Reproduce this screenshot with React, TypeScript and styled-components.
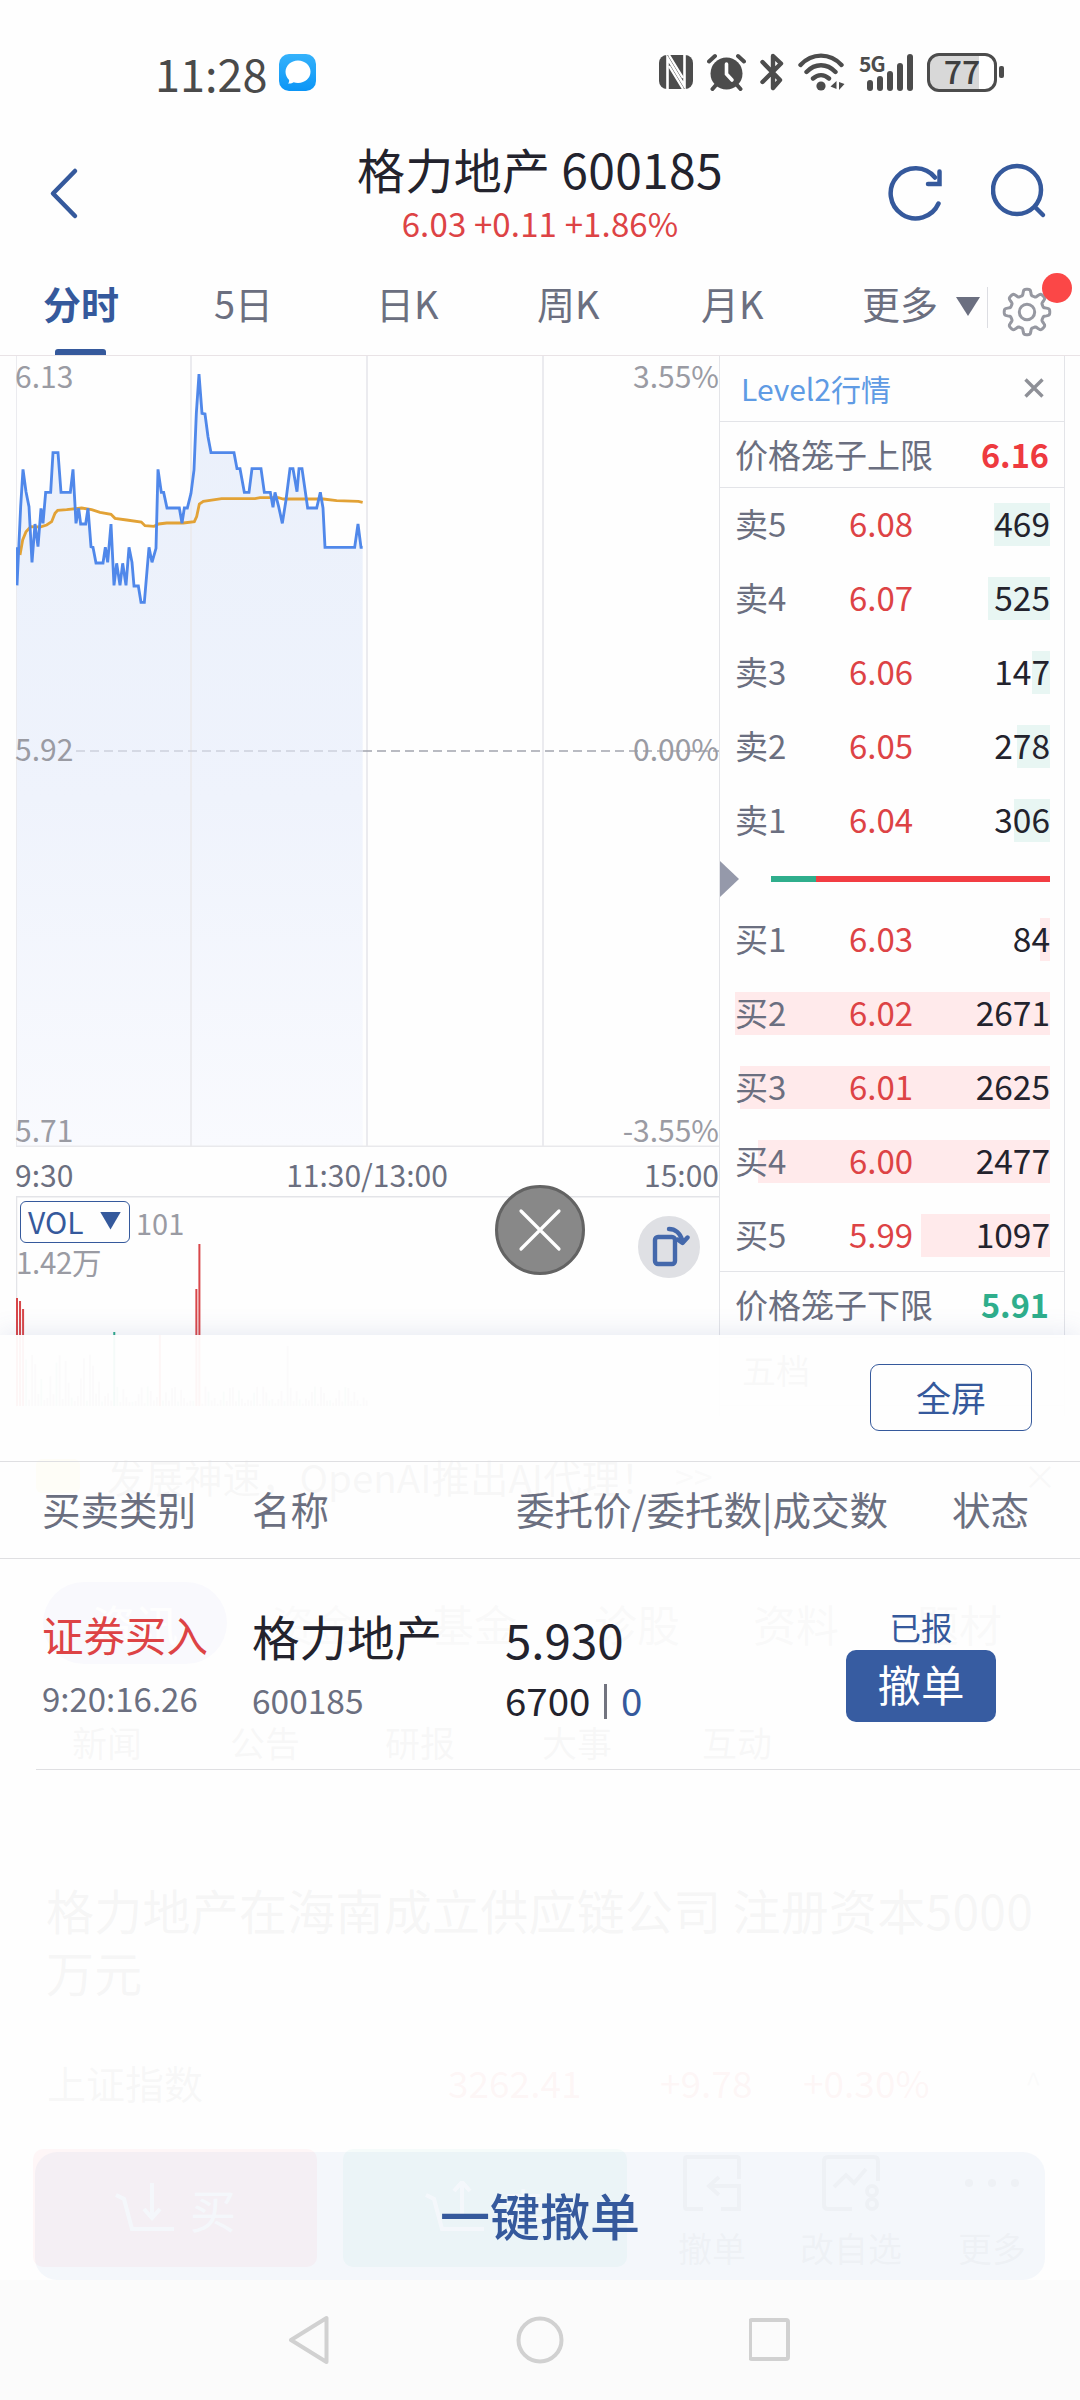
import React from "react";
import styled, { createGlobalStyle } from "styled-components";

const BLUE = "#35599c";
const RED = "#dd4345";
const GRAY = "#6b6f80";
const INK = "#23232d";
const LINE = "#e3e4e8";

const GlobalStyle = createGlobalStyle`
  * { box-sizing: border-box; }
  body { margin: 0; background: #fdfdfe; }
  body, button { font-family: "Noto Sans CJK SC", "Noto Sans", sans-serif; }
`;

const Phone = styled.div`
  position: relative;
  width: 1080px;
  height: 2400px;
  overflow: hidden;
  background: #fefefe;
`;

const Label = styled.span<{ $size: number; $color?: string; $bold?: boolean; $spacing?: number }>`
  font-size: ${(p) => p.$size}px;
  line-height: 1;
  color: ${(p) => p.$color ?? GRAY};
  font-weight: ${(p) => (p.$bold ? 700 : 400)};
  letter-spacing: ${(p) => p.$spacing ?? 0}px;
  white-space: nowrap;
`;

/* ---------- status bar ---------- */

const StatusBar = styled.header`
  height: 140px;
  padding: 47px 83px 43px 155px;
  display: flex;
  justify-content: space-between;
  align-items: center;
`;

const StatusGroup = styled.div<{ $gap: number }>`
  display: flex;
  align-items: center;
  gap: ${(p) => p.$gap}px;
`;

const ChatBadge = styled.span`
  width: 37px;
  height: 37px;
  border-radius: 10px;
  background: linear-gradient(#35b2fb, #0b95f6);
  display: grid;
  place-items: center;
`;

const Signal = styled.span`
  position: relative;
  width: 54px;
  height: 38px;
  display: flex;
  justify-content: flex-end;
  align-items: flex-end;
  gap: 4px;
`;

const SignalBar = styled.i<{ $h: number }>`
  width: 6px;
  height: ${(p) => p.$h}px;
  border-radius: 3px;
  background: #4c4c4c;
`;

const NetType = styled.b`
  position: absolute;
  left: 0;
  top: -1px;
  font: 700 21px/22px "Noto Sans CJK SC", sans-serif;
  letter-spacing: -1px;
  color: #4c4c4c;
`;

const Battery = styled.span`
  position: relative;
  width: 70px;
  height: 39px;
  border: 3px solid #4c4c4c;
  border-radius: 12px;
  background: linear-gradient(90deg, #d8d8d8 77%, #fff 77%);
  font: 500 32px/29px "Noto Sans CJK SC", sans-serif;
  color: #3f3f3f;
  text-align: center;
  &::after {
    content: "";
    position: absolute;
    right: -10px;
    top: 10px;
    width: 5px;
    height: 12px;
    border-radius: 2px;
    background: #4c4c4c;
  }
`;

/* ---------- title ---------- */

const TitleBar = styled.div`
  height: 115px;
  display: grid;
  grid-template-columns: 200px 1fr 200px;
`;

const BackCell = styled.div`
  padding: 26px 0 0 48px;
`;

const TitleCell = styled.div`
  display: flex;
  flex-direction: column;
  align-items: center;
  padding-top: 4px;
  gap: 15px;
`;

const ToolCell = styled.div`
  display: flex;
  gap: 47px;
  padding: 23px 0 0 8px;
`;

/* ---------- tabs ---------- */

const Tabs = styled.nav`
  height: 101px;
  display: grid;
  grid-template-columns: 171px 162px 161px 164px 161px 123px 46px 92px;
  padding-top: 29px;
  border-bottom: 1.5px solid #e9e3e6;
  background: #fefefe;
`;

const Tab = styled.div<{ $active?: boolean }>`
  padding-left: 43px;
  display: flex;
  flex-direction: column;
  justify-content: space-between;
  font-size: 38px;
  line-height: 38px;
  white-space: nowrap;
  color: ${(p) => (p.$active ? BLUE : GRAY)};
  font-weight: ${(p) => (p.$active ? 700 : 400)};
  &::after {
    content: "";
    width: 51px;
    height: 6px;
    margin-left: 12px;
    border-radius: 3px 3px 0 0;
    background: ${(p) => (p.$active ? BLUE : "transparent")};
  }
`;

const Caret = styled.i<{ $w: number; $h: number; $color: string }>`
  display: block;
  width: ${(p) => p.$w}px;
  height: ${(p) => p.$h}px;
  background: ${(p) => p.$color};
  clip-path: polygon(0 0, 100% 0, 50% 100%);
`;

const CaretCell = styled.div`
  height: 41px;
  margin-top: 3px;
  padding-top: 10px;
  border-right: 1px solid #dcdde2;
  padding-left: 14px;
`;

const GearCell = styled.div`
  position: relative;
  padding: 3px 0 0 14px;
`;

const RedDot = styled.i`
  position: absolute;
  left: 54px;
  top: -11px;
  width: 30px;
  height: 30px;
  border-radius: 50%;
  background: #fb4747;
`;

/* ---------- quote area ---------- */

const Quote = styled.main`
  display: grid;
  grid-template-columns: 703px 346px;
  padding-left: 16px;
  height: 1060px;
`;

const ChartColumn = styled.section`
  display: flex;
  flex-direction: column;
`;

const Layered = styled.div<{ $h: number }>`
  display: grid;
  height: ${(p) => p.$h}px;
  > * { grid-area: 1 / 1; }
`;

const AxisLabels = styled.div`
  display: grid;
  grid-template-columns: 1fr auto;
  grid-template-rows: 373px 381px 1fr;
  padding-top: 4px;
  margin-left: -1px;
  > :nth-child(even) { text-align: right; }
`;

const TimeAxis = styled.div`
  height: 49px;
  display: grid;
  grid-template-columns: 1fr auto 1fr;
  padding-top: 12px;
  margin-left: -1px;
  > :last-child { text-align: right; }
`;

const VolHead = styled.div`
  padding: 5px 0 0 4px;
  display: flex;
  flex-direction: column;
  gap: 4px;
`;

const VolRow = styled.div`
  display: flex;
  align-items: center;
  gap: 6px;
`;

const VolPick = styled.button`
  width: 110px;
  height: 42px;
  border: 1.5px solid ${BLUE};
  border-radius: 6px;
  background: transparent;
  color: ${BLUE};
  font-size: 30px;
  line-height: 34px;
  padding: 0 8px 3px 7px;
  display: flex;
  justify-content: space-between;
  align-items: center;
`;

/* ---------- order book ---------- */

const Book = styled.section`
  border-left: 1.5px solid ${LINE};
  border-right: 1.5px solid ${LINE};
`;

const BookRow = styled.div<{ $h: number; $pad?: string }>`
  height: ${(p) => p.$h}px;
  padding: ${(p) => p.$pad ?? "0 15px 1px 15px"};
  display: flex;
  align-items: center;
  justify-content: space-between;
  border-bottom: 1.5px solid ${LINE};
`;

const Levels = styled.div<{ $top: number; $bottom: number }>`
  padding: ${(p) => p.$top}px 14px ${(p) => p.$bottom}px 15px;
  display: flex;
  flex-direction: column;
  gap: 31px;
`;

const Level = styled.div<{ $side: "sell" | "buy" }>`
  height: 43px;
  display: grid;
  grid-template-columns: 114px 1fr auto;
  align-items: center;
  padding-bottom: 3px;
  background: linear-gradient(${(p) => (p.$side === "sell" ? "#e8f6f3, #e8f6f3" : "#ffeaeb, #ffeaeb")}) right / var(--w) 100% no-repeat;
`;

const RatioRow = styled.div`
  height: 36px;
  display: flex;
  align-items: center;
  padding-right: 14px;
`;

const Pointer = styled.i`
  width: 19px;
  height: 36px;
  margin-right: 32px;
  background: #9599aa;
  clip-path: polygon(0 0, 100% 50%, 0 100%);
`;

const Ratio = styled.div`
  flex: 1;
  height: 6px;
  background: linear-gradient(90deg, #2fae8c 45px, #f23d43 45px);
`;

/* ---------- page content under the sheet ---------- */

const Strip = styled.div<{ $h: number; $cols: string; $left: number }>`
  height: ${(p) => p.$h}px;
  padding-left: ${(p) => p.$left}px;
  display: grid;
  grid-template-columns: ${(p) => p.$cols};
  align-items: center;
`;

const AdTag = styled.i`
  width: 44px;
  height: 34px;
  border-radius: 6px;
  background: #f5dc5a;
`;

const Pill = styled.span`
  width: 184px;
  height: 82px;
  border-radius: 41px;
  background: #8f8fd8;
  display: grid;
  place-items: center;
`;

const NewsTab = styled.span`
  font-size: 35px;
  line-height: 56px;
  color: #666;
`;

const Headline = styled.p`
  margin: 0;
  padding: 104px 0 0 46px;
  height: 250px;
  font-size: 48px;
  line-height: 62px;
  letter-spacing: 0.25px;
  color: #444;
  white-space: nowrap;
`;

const TradeBar = styled.div`
  margin-top: 9px;
  padding-left: 33px;
  display: flex;
  align-items: flex-start;
`;

const TradeButton = styled.span<{ $color: string; $mr: number }>`
  width: 284px;
  height: 118px;
  margin-right: ${(p) => p.$mr}px;
  border-radius: 10px;
  background: ${(p) => p.$color};
  display: flex;
  align-items: center;
  justify-content: center;
  gap: 16px;
`;

const TradeItem = styled.span<{ $w: number }>`
  width: ${(p) => p.$w}px;
  height: 116px;
  padding-top: 6px;
  display: flex;
  flex-direction: column;
  align-items: center;
  justify-content: space-between;
`;

/* ---------- sheet ---------- */

const Sheet = styled.section`
  position: absolute;
  left: 0;
  top: 1335px;
  width: 1080px;
  height: 945px;
  display: flex;
  flex-direction: column;
  background: rgba(254, 254, 254, 0.955);
  box-shadow: 0 -2px 24px rgba(70, 95, 160, 0.13);
`;

const SheetTools = styled.div`
  height: 127px;
  padding: 29px 48px 0 0;
  display: flex;
  justify-content: flex-end;
  border-bottom: 1.5px solid #dfdfe2;
`;

const FullButton = styled.button`
  width: 162px;
  height: 67px;
  border: 1.5px solid ${BLUE};
  border-radius: 9px;
  background: transparent;
  font-size: 35px;
  line-height: 1;
  padding: 0 0 3px;
  color: ${BLUE};
`;

const HeadRow = styled.div`
  height: 97px;
  padding: 0 51px 4px 42px;
  display: grid;
  grid-template-columns: 210px 1fr auto 64px auto;
  align-items: center;
  border-bottom: 1.5px solid #dfdfe2;
  > :nth-child(4) { grid-column: 5; }
`;

const OrderRow = styled.div`
  height: 211px;
  margin-left: 36px;
  padding-left: 6px;
  display: grid;
  grid-template-columns: 210px 253px 1fr 150px 84px;
  border-bottom: 1.5px solid #dfdfe2;
  > :nth-child(4) { grid-column: 4; }
`;

const Cell = styled.div<{ $top: number; $gap: number }>`
  display: flex;
  flex-direction: column;
  padding-top: ${(p) => p.$top}px;
  gap: ${(p) => p.$gap}px;
`;

const Filled = styled.div`
  display: flex;
  align-items: center;
  gap: 14px;
`;

const Divider = styled.i`
  width: 2.5px;
  height: 35px;
  margin-top: 4px;
  background: #72747f;
`;

const StateCell = styled.div`
  display: flex;
  flex-direction: column;
  align-items: center;
  padding-top: 52px;
  gap: 7px;
`;

const CancelButton = styled.button`
  width: 150px;
  height: 72px;
  border: 0;
  border-radius: 10px;
  background: #375ca1;
  color: #fff;
  font-size: 43.5px;
  line-height: 1;
  padding: 0 0 3px;
`;

const CancelAll = styled.button`
  margin: auto 35px 0;
  height: 128px;
  border: 0;
  border-radius: 22px;
  background: rgba(60, 110, 190, 0.052);
  color: ${BLUE};
  font-size: 50px;
  font-weight: 500;
  line-height: 1;
  padding: 0 0 5px;
`;

const NavBar = styled.footer`
  position: absolute;
  left: 0;
  top: 2280px;
  width: 1080px;
  height: 120px;
  padding: 0 289px;
  display: flex;
  justify-content: space-between;
  align-items: center;
  background: #fbfbfb;
`;

/* ---------- floating buttons ---------- */

const Float = styled.button<{ $x: number; $y: number; $r: number; $bg: string; $edge: string }>`
  position: absolute;
  left: ${(p) => p.$x - p.$r}px;
  top: ${(p) => p.$y - p.$r}px;
  width: ${(p) => p.$r * 2}px;
  height: ${(p) => p.$r * 2}px;
  padding: 0;
  border: 3px solid ${(p) => p.$edge};
  border-radius: 50%;
  background: ${(p) => p.$bg};
  display: grid;
  place-items: center;
`;

/* ---------- data ---------- */

const PRICE =
  "48,592 51,706 62,470 69,358 78,425 87,470 96,637 105,522 114,590 123,475 129,520 137,427 152,427 159,308 174,308 183,427 211,427 219,358 228,520 236,475 242,522 257,522 264,475 273,590 279,592 288,639 309,639 316,592 323,637 333,522 342,706 350,640 360,706 368,640 378,706 387,592 396,637 402,708 415,708 423,757 433,757 447,592 456,637 468,595 474,358 484,427 491,427 501,474 538,474 546,520 553,474 562,474 573,430 582,360 589,190 597,72 606,190 615,192 624,260 633,308 702,308 711,356 720,356 733,427 747,427 756,356 783,356 793,427 811,427 819,472 825,427 836,470 847,520 858,450 870,356 879,356 891,425 897,356 906,356 923,474 950,474 961,427 969,474 975,592 1064,592 1074,522 1083,592 1088,592";
const AVERAGE =
  "60,615 68,570 78,545 92,530 120,531 140,525 155,515 165,490 173,481 200,479 245,474 275,479 300,487 333,493 345,505 380,510 424,516 435,527 462,529 476,522 500,519 550,519 583,515 590,500 598,462 610,454 665,446 765,446 780,443 835,443 850,447 970,447 1010,452 1075,454 1088,457";

const SELLS: [string, string, number, number][] = [
  ["卖5", "6.08", 469, 56],
  ["卖4", "6.07", 525, 62],
  ["卖3", "6.06", 147, 18],
  ["卖2", "6.05", 278, 33],
  ["卖1", "6.04", 306, 36],
];
const BUYS: [string, string, number, number][] = [
  ["买1", "6.03", 84, 10],
  ["买2", "6.02", 2671, 315],
  ["买3", "6.01", 2625, 310],
  ["买4", "6.00", 2477, 292],
  ["买5", "5.99", 1097, 129],
];

const VOLUME = Array.from({ length: 116 }, (_, i) => {
  const fixed: Record<number, number> = { 0: 112, 1: 109, 2: 101, 32: 78, 47: 75, 59: 121, 60: 166, 89: 64 };
  const wave = Math.abs(Math.sin(i * 12.9) * Math.cos(i * 4.3));
  const h = fixed[i] ?? 6 + wave * (i < 30 ? 56 : 20);
  const main = i < 3 || i === 47 || i === 59 || i === 60;
  const color = i === 32 ? "#2fa98a" : main ? "#d8474a" : i % 5 === 3 ? "#8fc9b8" : "#b5a9ad";
  return { x: i * 3.04, h, color };
});

function Ladder({ rows, side, top, bottom }: { rows: typeof SELLS; side: "sell" | "buy"; top: number; bottom: number }) {
  return (
    <Levels $top={top} $bottom={bottom}>
      {rows.map(([name, price, qty, w]) => (
        <Level key={name} $side={side} style={{ "--w": `${w}px` } as React.CSSProperties}>
          <Label $size={33}>{name}</Label>
          <Label $size={33} $color={RED}>{price}</Label>
          <Label $size={33.5} $color={INK}>{qty}</Label>
        </Level>
      ))}
    </Levels>
  );
}

function PriceChart() {
  return (
    <svg width="703" height="791" viewBox="0 0 703 791">
      <defs>
        <linearGradient id="area" x1="0" y1="0" x2="0" y2="1">
          <stop offset="0" stopColor="#eaf0fb" />
          <stop offset="0.55" stopColor="#eff3fc" />
          <stop offset="1" stopColor="#f9fafe" />
        </linearGradient>
      </defs>
      <g transform="translate(-16 -6) scale(0.33333)">
        <polygon points={`48,2388 ${PRICE} 1088,2388`} fill="url(#area)" />
      </g>
      <g stroke="#ebebef" strokeWidth="2">
        <path d="M0 0V791M175 0V791M351 0V791M527 0V791" />
        <path d="M0 790.500H703" stroke="#e9e9ec" />
      </g>
      <path d="M60 395H347" stroke="#cdd1dc" strokeWidth="1.6" strokeDasharray="9 5" />
      <path d="M347 395H703" stroke="#a2a5af" strokeWidth="1.6" strokeDasharray="9 5" />
      <g transform="translate(-16 -6) scale(0.33333)" fill="none" strokeWidth="8.5" strokeLinejoin="miter" strokeMiterlimit="2">
        <polyline points={AVERAGE} stroke="#e2a236" />
        <polyline points={PRICE} stroke="#5088ea" />
      </g>
    </svg>
  );
}

function GearIcon() {
  const pts: string[] = [];
  for (let i = 0; i <= 160; i++) {
    const a = (i / 160) * Math.PI * 2 - Math.PI / 2;
    const c = Math.cos(8 * (a + Math.PI / 2));
    const r = 19.8 + 3 * Math.tanh(c * 2.4);
    pts.push(`${(25 + r * Math.cos(a)).toFixed(2)},${(25 + r * Math.sin(a)).toFixed(2)}`);
  }
  return (
    <svg width="50" height="50" viewBox="0 0 50 50" fill="none" stroke="#9698a1" strokeWidth="3">
      <polygon points={pts.join(" ")} strokeLinejoin="round" />
      <circle cx="25" cy="25" r="7.7" />
    </svg>
  );
}

export default function App() {
  return (
    <Phone>
      <GlobalStyle />
      <StatusBar>
        <StatusGroup $gap={12}>
          <Label $size={45} $color="#4a4a4a">11:28</Label>
          <ChatBadge>
            <svg width="28" height="28" viewBox="0 0 28 28">
              <path d="M14 2.5c7 0 12.500 5 12.500 11.300S21 25 14 25c-1.600 0-3-.2-4.300-.7-1.500 1-3.500 1.500-5.700 1.200 1-1 1.300-2.300 1.100-3.600C2.900 19.900 1.500 17 1.500 13.800 1.500 7.500 7 2.500 14 2.500z" fill="#fff" />
            </svg>
          </ChatBadge>
        </StatusGroup>
        <StatusGroup $gap={14}>
          <svg width="34" height="36" viewBox="0 0 34 36">
            <rect x="0" y="1" width="34" height="34" rx="8" fill="#4c4c4c" />
            <path d="M8.500 35V4L25.500 32V1" fill="none" stroke="#fff" strokeWidth="2.600" />
            <path d="M10 12L24 35M10 1L24 24" fill="none" stroke="#fff" strokeWidth="2.400" />
          </svg>
          <svg width="39" height="38" viewBox="0 0 39 38" fill="none" stroke="#4c4c4c" strokeLinecap="round">
            <circle cx="19.500" cy="20.500" r="16" fill="#4c4c4c" stroke="none" />
            <path d="M2 8.500L8 3M37 8.500L31 3M9 32L5.500 36M30 32L33.500 36" strokeWidth="4" />
            <path d="M19.500 11V21L25 27" stroke="#fff" strokeWidth="3.600" />
          </svg>
          <svg width="24" height="38" viewBox="0 0 24 38" fill="none" stroke="#4c4c4c" strokeWidth="4.400" strokeLinejoin="round" strokeLinecap="round">
            <path d="M2.500 9L20 27L13 35V3L21 10.500L2.500 29" />
          </svg>
          <svg width="47" height="38" viewBox="0 0 47 38" fill="none" stroke="#4c4c4c" strokeWidth="4.400" strokeLinecap="round">
            <path d="M2.500 12C14-.5 32-.5 43.500 12M8.500 19C17 10 29 10 37.500 19M15 25.500C20 21 26 21 31 25.500" />
            <circle cx="23" cy="33" r="4.600" fill="#4c4c4c" stroke="none" />
            <path d="M38.500 28V36L32.500 33.500zM41 29V37L46.500 31z" fill="#4c4c4c" stroke="none" />
          </svg>
          <Signal>
            <NetType>5G</NetType>
            <SignalBar $h={11} />
            <SignalBar $h={15} />
            <SignalBar $h={20} />
            <SignalBar $h={28} />
            <SignalBar $h={37} />
          </Signal>
          <Battery>77</Battery>
        </StatusGroup>
      </StatusBar>

      <TitleBar>
        <BackCell>
          <svg width="32" height="56" viewBox="0 0 32 56" fill="none" stroke={BLUE} strokeWidth="4.500" strokeLinecap="round" strokeLinejoin="round">
            <path d="M27 5L5 27.500L27 50" />
          </svg>
        </BackCell>
        <TitleCell>
          <Label $size={48} $color={INK} $spacing={0.3}>格力地产 600185</Label>
          <Label $size={33} $color={RED} $spacing={0.15}>6.03 +0.11 +1.86%</Label>
        </TitleCell>
        <ToolCell>
          <svg width="56" height="60" viewBox="0 0 56 60" fill="none" stroke={BLUE} strokeWidth="4.500">
            <path d="M50.500 40.500A25 25 0 1 1 47 14.500" strokeLinecap="round" />
            <path d="M51.500 8.500V21H40" strokeLinecap="round" />
          </svg>
          <svg width="56" height="60" viewBox="0 0 56 60" fill="none" stroke={BLUE} strokeWidth="4.500" strokeLinecap="round">
            <circle cx="26" cy="27" r="24" />
            <path d="M44 44L52 52" />
          </svg>
        </ToolCell>
      </TitleBar>

      <Tabs>
        <Tab $active>分时</Tab>
        <Tab>5日</Tab>
        <Tab>日K</Tab>
        <Tab>周K</Tab>
        <Tab>月K</Tab>
        <Tab>更多</Tab>
        <CaretCell><Caret $w={24} $h={19} $color={GRAY} /></CaretCell>
        <GearCell>
          <GearIcon />
          <RedDot />
        </GearCell>
      </Tabs>

      <Quote>
        <ChartColumn>
          <Layered $h={791}>
            <PriceChart />
            <AxisLabels>
              <Label $size={30} $color="#9a9ba3">6.13</Label>
              <Label $size={30} $color="#9a9ba3">3.55%</Label>
              <Label $size={30} $color="#9a9ba3">5.92</Label>
              <Label $size={30} $color="#9a9ba3">0.00%</Label>
              <Label $size={30} $color="#9a9ba3">5.71</Label>
              <Label $size={30} $color="#9a9ba3">-3.55%</Label>
            </AxisLabels>
          </Layered>
          <TimeAxis>
            <Label $size={30}>9:30</Label>
            <Label $size={30}>11:30/13:00</Label>
            <Label $size={30}>15:00</Label>
          </TimeAxis>
          <Layered $h={211}>
            <svg width="703" height="211" viewBox="0 0 703 211">
              <path d="M.5 211V.8H703" fill="none" stroke={LINE} strokeWidth="1.500" />
              {VOLUME.map((v) => (
                <rect key={v.x} x={v.x} y={214 - v.h} width="2" height={v.h - 4} fill={v.color} />
              ))}
            </svg>
            <VolHead>
              <VolRow>
                <VolPick>VOL<Caret $w={21} $h={18} $color={BLUE} /></VolPick>
                <Label $size={29} $color="#9a9ba3">101</Label>
              </VolRow>
              <Label $size={29.5} $color="#9a9ba3" $spacing={-0.3}>
                <span style={{ marginLeft: -4 }}>1.42万</span>
              </Label>
            </VolHead>
          </Layered>
        </ChartColumn>

        <Book>
          <BookRow $h={66} $pad="0 20px 2px 21px">
            <Label $size={30} $color="#5f9be4">Level2行情</Label>
            <svg width="20" height="20" viewBox="0 0 20 20" stroke="#8e9097" strokeWidth="3.400">
              <path d="M1.500 1.500L18.500 18.500M18.500 1.500L1.500 18.500" />
            </svg>
          </BookRow>
          <BookRow $h={66}>
            <Label $size={33}>价格笼子上限</Label>
            <Label $size={32.5} $color="#ee3a3f" $bold>6.16</Label>
          </BookRow>
          <Ladder rows={SELLS} side="sell" top={15} bottom={19} />
          <RatioRow>
            <Pointer />
            <Ratio />
          </RatioRow>
          <Ladder rows={BUYS} side="buy" top={21} bottom={14} />
          <BookRow $h={67} style={{ borderTop: `1.5px solid ${LINE}` }}>
            <Label $size={33}>价格笼子下限</Label>
            <Label $size={32.5} $color="#2fae8c" $bold>5.91</Label>
          </BookRow>
          <BookRow $h={68} $pad="0 30px 4px 22px">
            <Label $size={34} $color="#777">五档</Label>
          </BookRow>
        </Book>
      </Quote>

      <Strip $h={120} $cols="71px 568px 348px auto" $left={36}>
        <AdTag />
        <Label $size={38.5} $color="#666">发展神速，OpenAI推出AI代理！</Label>
        <Label $size={34} $color="#999">&gt;&gt;</Label>
        <Label $size={34} $color="#777">×</Label>
      </Strip>
      <Strip $h={174} $cols="228px 160px 163px 159px 163px auto" $left={43}>
        <Pill><Label $size={43} $color="#fff">资讯</Label></Pill>
        <Label $size={43} $color="#aaa">资金</Label>
        <Label $size={43} $color="#888">基金</Label>
        <Label $size={43} $color="#888">诊股</Label>
        <Label $size={43} $color="#888">资料</Label>
        <Label $size={43} $color="#888">题材</Label>
      </Strip>
      <Strip $h={64} $cols="158px 155px 157px 160px auto" $left={72}>
        <NewsTab>新闻</NewsTab>
        <NewsTab>公告</NewsTab>
        <NewsTab>研报</NewsTab>
        <NewsTab>大事</NewsTab>
        <NewsTab>互动</NewsTab>
      </Strip>
      <Headline>
        格力地产在海南成立供应链公司 注册资本5000
        <br />
        万元
      </Headline>
      <Strip $h={116} $cols="401px 212px 143px 222px auto" $left={47}>
        <Label $size={39} $color="#666">上证指数</Label>
        <Label $size={37} $color="#e0474a">3262.41</Label>
        <Label $size={37} $color="#e0474a">+9.78</Label>
        <Label $size={37} $color="#e0474a">+0.30%</Label>
        <Label $size={30} $color="#aaa">^</Label>
      </Strip>
      <TradeBar>
        <TradeButton $color="#f2485c" $mr={26}>
          <svg width="60" height="54" viewBox="0 0 60 54" fill="none" stroke="#fff" strokeWidth="4">
            <path d="M2 14L10 18L18 48H60M38 2V36M30 28L38 37L46 28" />
          </svg>
          <Label $size={46} $color="#fff">买</Label>
        </TradeButton>
        <TradeButton $color="#35b39a" $mr={36}>
          <svg width="60" height="54" viewBox="0 0 60 54" fill="none" stroke="#fff" strokeWidth="4">
            <path d="M2 14L10 18L18 48H60M38 36V2M30 10L38 1L46 10" />
          </svg>
          <Label $size={46} $color="#fff">卖</Label>
        </TradeButton>
        <TradeItem $w={98}>
          <svg width="58" height="56" viewBox="0 0 58 56" fill="none" stroke="#777" strokeWidth="4">
            <path d="M20 54H4Q2 54 2 52V4Q2 2 4 2H54Q56 2 56 4V24M36 22L26 31L36 40M26 31H56V54H38" />
          </svg>
          <Label $size={34} $color="#777">撤单</Label>
        </TradeItem>
        <TradeItem $w={180}>
          <svg width="58" height="56" viewBox="0 0 58 56" fill="none" stroke="#777" strokeWidth="4">
            <path d="M30 54H6Q2 54 2 50V6Q2 2 6 2H52Q56 2 56 6V26M12 32L24 20L32 28L44 14" />
            <circle cx="50" cy="36" r="5" />
            <circle cx="50" cy="49" r="5" />
          </svg>
          <Label $size={34} $color="#777">改自选</Label>
        </TradeItem>
        <TradeItem $w={102}>
          <svg width="56" height="56" viewBox="0 0 56 56" fill="#777">
            <circle cx="5" cy="28" r="4" />
            <circle cx="28" cy="28" r="4" />
            <circle cx="51" cy="28" r="4" />
          </svg>
          <Label $size={34} $color="#777">更多</Label>
        </TradeItem>
      </TradeBar>

      <Sheet>
        <SheetTools>
          <FullButton>全屏</FullButton>
        </SheetTools>
        <HeadRow>
          <Label $size={38.5}>买卖类别</Label>
          <Label $size={38.5}>名称</Label>
          <Label $size={38.5}>委托价/委托数|成交数</Label>
          <Label $size={38.5}>状态</Label>
        </HeadRow>
        <OrderRow>
          <Cell $top={55} $gap={26}>
            <Label $size={41.5} $color={RED}>证券买入</Label>
            <Label $size={33}>9:20:16.26</Label>
          </Cell>
          <Cell $top={53} $gap={23}>
            <Label $size={47.5} $color={INK}>格力地产</Label>
            <Label $size={33.5}>600185</Label>
          </Cell>
          <Cell $top={56} $gap={17}>
            <Label $size={47.5} $color={INK}>5.930</Label>
            <Filled>
              <Label $size={38.5} $color={INK}>6700</Label>
              <Divider />
              <Label $size={38.5} $color={BLUE}>0</Label>
            </Filled>
          </Cell>
          <StateCell>
            <Label $size={31.5} $color={BLUE}>已报</Label>
            <CancelButton>撤单</CancelButton>
          </StateCell>
        </OrderRow>
        <CancelAll>一键撤单</CancelAll>
      </Sheet>

      <Float $x={540} $y={1230} $r={45} $bg="#888888" $edge="#636363">
        <svg width="44" height="44" viewBox="0 0 44 44" stroke="#fff" strokeWidth="3.200" strokeLinecap="round">
          <path d="M3 3L41 41M41 3L3 41" />
        </svg>
      </Float>
      <Float $x={669} $y={1247} $r={31} $bg="#dfe0e4" $edge="#dfe0e4">
        <svg width="42" height="42" viewBox="0 0 42 42" fill="none" stroke="#4468ab" strokeWidth="4.400" strokeLinecap="round" strokeLinejoin="round">
          <rect x="7" y="11" width="20" height="27" rx="3" />
          <path d="M21 3C27 3 32.500 7 34 14M29.500 13.500L34.500 17L39.500 11.500" />
        </svg>
      </Float>

      <NavBar>
        <svg width="42" height="50" viewBox="0 0 42 50" fill="none" stroke="#d1d1d1" strokeWidth="4" strokeLinejoin="round">
          <path d="M2 25L37.500 3V47z" />
        </svg>
        <svg width="48" height="50" viewBox="0 0 48 50" fill="none" stroke="#d1d1d1" strokeWidth="4">
          <circle cx="24" cy="25" r="21.500" />
        </svg>
        <svg width="42" height="50" viewBox="0 0 42 50" fill="none" stroke="#d1d1d1" strokeWidth="4">
          <rect x="1" y="5" width="38" height="39" rx="2" />
        </svg>
      </NavBar>
    </Phone>
  );
}
